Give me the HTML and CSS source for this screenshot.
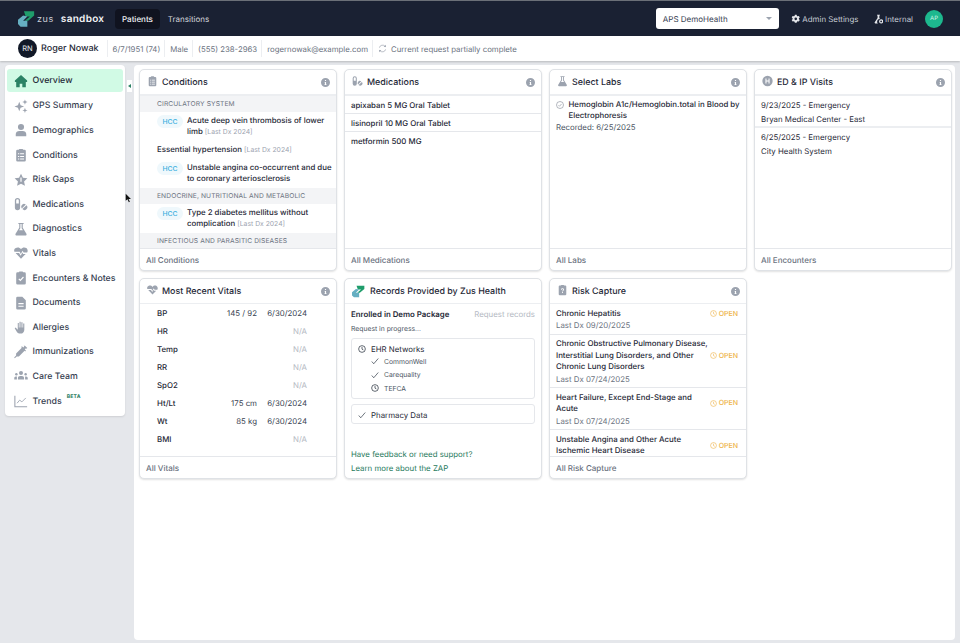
FILE: index.html
```html
<!DOCTYPE html>
<html lang="en">
<head>
    <meta charset="UTF-8">
    <meta name="viewport" content="width=device-width, initial-scale=1.0">
    <title>Roger Nowak - Overview</title>
    <link rel="stylesheet" href="styles.css">
</head>
<body>

<svg class="icon-defs" width="0" height="0" aria-hidden="true">
    <symbol id="i-logo" viewBox="0 0 20 20">
        <path d="M7 1h12v5l-7 6H8l6-5H9z" fill="#1f9d6b"/>
        <path d="M6 6l5 1-5 5h5v7H3l-3-3V11z" fill="#66afc2"/>
    </symbol>
    <symbol id="i-home" viewBox="0 0 16 16">
        <path d="M8 1L1 7.500V9h1.500v6h4v-4h3v4h4V9H15V7.500z"/>
    </symbol>
    <symbol id="i-spark" viewBox="0 0 16 16">
        <path d="M6 3l1.500 4 4 1.500-4 1.500L6 14l-1.500-4-4-1.500 4-1.500z"/>
        <path d="M12.500 .5l.8 2.200 2.200.8-2.200.8-.8 2.200-.8-2.200-2.200-.8 2.200-.8zM12.500 10l.8 2.200 2.200.8-2.200.8-.8 2.200-.8-2.200-2.200-.8 2.200-.8z"/>
    </symbol>
    <symbol id="i-person" viewBox="0 0 16 16">
        <circle cx="8" cy="4.500" r="3.500"/>
        <path d="M2 15v-2.500C2 10 4 9 6 9h4c2 0 4 1 4 3.500V15z"/>
    </symbol>
    <symbol id="i-clip" viewBox="0 0 16 16">
        <path fill-rule="evenodd" d="M4 2h1.500a1 1 0 0 1 1-1h3a1 1 0 0 1 1 1H12a1.500 1.500 0 0 1 1.500 1.500v10.500A1.500 1.500 0 0 1 12 15.500H4A1.500 1.500 0 0 1 2.500 14V3.500A1.500 1.500 0 0 1 4 2zM4.500 6v1.200h1.500V6zM7 6v1.200h4.500V6zM4.500 9v1.200h1.500V9zM7 9v1.200h4.500V9zM4.500 12v1.200h1.500V12zM7 12v1.200h4.500V12z"/>
    </symbol>
    <symbol id="i-star" viewBox="0 0 16 16">
        <path fill-rule="evenodd" d="M8 .8l2.200 4.700 5.100.6-3.800 3.500 1 5.100L8 12.200l-4.500 2.500 1-5.100L.7 6.100l5.100-.6zM7.300 5v5h1.400V5z"/>
    </symbol>
    <symbol id="i-pills" viewBox="0 0 16 16">
        <path fill-rule="evenodd" d="M1 4a3 3 0 0 1 6 0v8a3 3 0 0 1-6 0zM2.500 4v3.500h3V4a1.500 1.500 0 0 0-3 0z"/>
        <path d="M8.800 9.500a3.200 3.200 0 0 1 4.700-1L8.900 13.100a3.200 3.200 0 0 1-.1-3.600zM14.300 9.300a3.200 3.200 0 0 1-4.700 4.500z"/>
    </symbol>
    <symbol id="i-flask" viewBox="0 0 16 16">
        <path d="M5 1h6v1.300h-1V6.500l4.200 7A1.300 1.300 0 0 1 13 15.500H3a1.300 1.300 0 0 1-1.200-2l4.200-7V2.300H5zM7.300 2.300V7L5.800 9.500h4.400L8.700 7V2.300z"/>
    </symbol>
    <symbol id="i-heart" viewBox="0 0 16 16">
        <path d="M8 3.500C9.500 1.500 12 1 14 2.300c1.800 1.200 2 3.500 1 5.200H11L9.800 5.500 7.800 9 6.500 6.500h-6C-.2 4.800.2 3.300 2 2.300 4 1 6.500 1.500 8 3.500zM1.800 8h4l1.800 3 2-3.500.8 1.500h3L8 14.500z"/>
    </symbol>
    <symbol id="i-check-clip" viewBox="0 0 16 16">
        <path fill-rule="evenodd" d="M4 1.500h1.500a1 1 0 0 1 1-.8h3a1 1 0 0 1 1 .8H12A1.500 1.500 0 0 1 13.500 3v11a1.500 1.500 0 0 1-1.500 1.500H4A1.500 1.500 0 0 1 2.500 14V3A1.500 1.500 0 0 1 4 1.500zM5 9.500l2.300 2.300 4-4.500-1-.9-3 3.400-1.400-1.300z"/>
    </symbol>
    <symbol id="i-doc" viewBox="0 0 16 16">
        <path fill-rule="evenodd" d="M4 .8h5.500l4 4V14a1.500 1.500 0 0 1-1.500 1.500H4A1.500 1.500 0 0 1 2.500 14V2.300A1.500 1.500 0 0 1 4 .8zM5 8v1.300h6V8zM5 11v1.300h6V11z"/>
    </symbol>
    <symbol id="i-hand" viewBox="0 0 16 16">
        <path d="M4.300 3.500h1.200v5h.8V2h1.300v6.500h.8V2.500h1.300v6h.8V4h1.300v7c0 2.500-1.800 4.500-4.300 4.500H7c-2 0-3-1-4-2.500L.8 9.500l1-.8L4.300 11z"/>
    </symbol>
    <symbol id="i-syringe" viewBox="0 0 16 16">
        <path d="M12.500.8l2.700 2.700-.9.9-.7-.7-1.300 1.300 1.400 1.400-.9.9-.7-.7-6.500 6.500H3.100L.9 15 .2 14.400l2.200-2.300v-2.500L8.900 3.100l-.7-.7.9-.9 1.400 1.400 1.300-1.300-.7-.7z"/>
    </symbol>
    <symbol id="i-team" viewBox="0 0 16 16">
        <circle cx="8" cy="4.500" r="2.300"/>
        <circle cx="2.700" cy="6" r="1.400"/>
        <circle cx="13.300" cy="6" r="1.400"/>
        <path d="M4.500 12v-1.500C4.500 9 5.500 8 7 8h2c1.500 0 2.500 1 2.500 2.500V12zM.3 12v-1.500C.3 9.300 1 8.500 2 8.500h1.300v3.500zM15.700 12v-1.500c0-1.200-.7-2-1.700-2h-1.300v3.500z"/>
    </symbol>
    <symbol id="i-trend" viewBox="0 0 16 16">
        <path d="M1 2v12.500h14" fill="none" stroke="currentColor" stroke-width="1.200"/>
        <path d="M3.500 10.500L6.500 7l2.500 2 4.500-4.500" fill="none" stroke="currentColor" stroke-width="1"/>
    </symbol>
    <symbol id="i-hospital" viewBox="0 0 16 16">
        <path fill-rule="evenodd" d="M8 .5a7.500 7.500 0 1 1 0 15 7.500 7.500 0 0 1 0-15zM5 4.500v7h1.500V8.800h3v2.700H11v-7H9.500v2.800h-3V4.500z"/>
    </symbol>
    <symbol id="i-risk" viewBox="0 0 16 16">
        <path fill-rule="evenodd" d="M4 1.500h1.500a1 1 0 0 1 1-.8h3a1 1 0 0 1 1 .8H12A1.500 1.500 0 0 1 13.500 3v11a1.500 1.500 0 0 1-1.500 1.500H4A1.500 1.500 0 0 1 2.500 14V3A1.500 1.500 0 0 1 4 1.500zM8 5.500A2.200 2.200 0 0 0 5.800 7.500h1.300c.1-.5.4-.8.9-.8s.9.300.9.800c0 .9-1.500 1-1.500 2.700h1.300c0-1.200 1.500-1.400 1.500-2.900A2.200 2.200 0 0 0 8 5.500zM7.400 11v1.300h1.300V11z"/>
    </symbol>
    <symbol id="i-info" viewBox="0 0 16 16">
        <path fill-rule="evenodd" d="M8 0a8 8 0 1 1 0 16A8 8 0 0 1 8 0zM7 3.500v2h2v-2zM6.500 7v1.300H7v3h-.8v1.200h3.600v-1.200H9V7z"/>
    </symbol>
    <symbol id="i-clock" viewBox="0 0 16 16">
        <circle cx="8" cy="8" r="6.700" fill="none" stroke="currentColor" stroke-width="1.400"/>
        <path d="M8 4v4.300l2.800 1.500" fill="none" stroke="currentColor" stroke-width="1.400"/>
    </symbol>
    <symbol id="i-check" viewBox="0 0 16 16">
        <path d="M1.500 9l4 4.500L14.500 3" fill="none" stroke="currentColor" stroke-width="1.300"/>
    </symbol>
    <symbol id="i-gear" viewBox="0 0 16 16">
        <path fill-rule="evenodd" d="M6.500.8h3l.5 2 1.300.7 2-.6 1.500 2.600-1.500 1.400v1.500l1.500 1.400-1.500 2.600-2-.6-1.300.7-.5 2h-3l-.5-2-1.300-.7-2 .6L1.200 9.800l1.500-1.400V6.900L1.200 5.500l1.500-2.600 2 .6L6 2.800zM8 5.500a2.200 2.200 0 1 0 0 4.400 2.200 2.200 0 0 0 0-4.400z"/>
    </symbol>
    <symbol id="i-internal" viewBox="0 0 16 16">
        <path d="M5 1h5v1.300H9v4l1 1.700H8.500a4.500 4.500 0 0 0-2 7.500H2.300a1.300 1.300 0 0 1-1.100-2L6 6.300v-4H5z"/>
        <path fill-rule="evenodd" d="M12 8.500a3.500 3.500 0 1 1 0 7 3.500 3.500 0 0 1 0-7zm0 2a1.500 1.500 0 1 0 0 3 1.500 1.500 0 0 0 0-3z"/>
    </symbol>
    <symbol id="i-sync" viewBox="0 0 16 16">
        <path d="M2.500 6.500A5.700 5.700 0 0 1 12.800 4.500M13.500 9.500A5.700 5.700 0 0 1 3.200 11.500" fill="none" stroke="currentColor" stroke-width="1.200"/>
        <path d="M14 1.500v4h-4zM2 14.500v-4h4z"/>
    </symbol>
    <symbol id="i-circle-check" viewBox="0 0 16 16">
        <circle cx="8" cy="8" r="7" fill="none" stroke="currentColor" stroke-width="1"/>
        <path d="M5 8.500l2 2 4-4.500" fill="none" stroke="currentColor" stroke-width="1"/>
    </symbol>
</svg>

<header class="topbar">
    <div class="brand">
        <svg class="brand-logo"><use href="#i-logo"/></svg>
        <span class="brand-zus">zus</span>
        <span class="brand-env">sandbox</span>
    </div>
    <nav class="topnav">
        <a class="topnav-item active">Patients</a>
        <a class="topnav-item">Transitions</a>
    </nav>
    <div class="topbar-right">
        <div class="org-select">
            <span>APS DemoHealth</span>
            <span class="org-caret"></span>
        </div>
        <a class="top-link link-admin"><svg class="top-icon"><use href="#i-gear"/></svg>Admin Settings</a>
        <a class="top-link link-internal"><svg class="top-icon"><use href="#i-internal"/></svg>Internal</a>
        <div class="user-avatar">AP</div>
    </div>
</header>

<div class="patient-bar">
    <div class="patient-avatar">RN</div>
    <span class="patient-name">Roger Nowak</span>
    <span class="patient-field">6/7/1951 (74)</span>
    <span class="patient-field">Male</span>
    <span class="patient-field">(555) 238-2963</span>
    <span class="patient-field">rogernowak@example.com</span>
    <span class="patient-field patient-status"><svg class="sync-icon"><use href="#i-sync"/></svg>Current request partially complete</span>
</div>

<div class="app-body">
    <aside class="sidebar">
        <a class="side-item active"><svg class="side-icon"><use href="#i-home"/></svg>Overview</a>
        <a class="side-item"><svg class="side-icon"><use href="#i-spark"/></svg>GPS Summary</a>
        <a class="side-item"><svg class="side-icon"><use href="#i-person"/></svg>Demographics</a>
        <a class="side-item"><svg class="side-icon"><use href="#i-clip"/></svg>Conditions</a>
        <a class="side-item"><svg class="side-icon"><use href="#i-star"/></svg>Risk Gaps</a>
        <a class="side-item"><svg class="side-icon"><use href="#i-pills"/></svg>Medications</a>
        <a class="side-item"><svg class="side-icon"><use href="#i-flask"/></svg>Diagnostics</a>
        <a class="side-item"><svg class="side-icon"><use href="#i-heart"/></svg>Vitals</a>
        <a class="side-item"><svg class="side-icon"><use href="#i-check-clip"/></svg>Encounters &amp; Notes</a>
        <a class="side-item"><svg class="side-icon"><use href="#i-doc"/></svg>Documents</a>
        <a class="side-item"><svg class="side-icon"><use href="#i-hand"/></svg>Allergies</a>
        <a class="side-item"><svg class="side-icon"><use href="#i-syringe"/></svg>Immunizations</a>
        <a class="side-item"><svg class="side-icon"><use href="#i-team"/></svg>Care Team</a>
        <a class="side-item"><svg class="side-icon"><use href="#i-trend"/></svg>Trends<sup class="beta">BETA</sup></a>
    </aside>
    <div class="collapse-tab"><span class="collapse-arrow"></span></div>
    <svg class="cursor" viewBox="0 0 10 14"><path d="M1 1v10l2.500-2.300L5.500 13l1.500-.7L5 8.300h3.500z"/></svg>

    <main class="dashboard">
        <section class="card">
            <div class="card-head">
                <svg class="card-icon"><use href="#i-clip"/></svg>
                <h2>Conditions</h2>
                <svg class="info-icon"><use href="#i-info"/></svg>
            </div>
            <div class="card-body">
                <div class="cond-group">Circulatory System</div>
                <div class="cond-row">
                    <span class="hcc">HCC</span>
                    <p>Acute deep vein thrombosis of lower limb <small>[Last Dx 2024]</small></p>
                </div>
                <div class="cond-row">
                    <p>Essential hypertension <small>[Last Dx 2024]</small></p>
                </div>
                <div class="cond-row">
                    <span class="hcc">HCC</span>
                    <p>Unstable angina co-occurrent and due to coronary arteriosclerosis</p>
                </div>
                <div class="cond-group">Endocrine, Nutritional and Metabolic</div>
                <div class="cond-row">
                    <span class="hcc">HCC</span>
                    <p>Type 2 diabetes mellitus without complication <small>[Last Dx 2024]</small></p>
                </div>
                <div class="cond-group">Infectious and Parasitic Diseases</div>
            </div>
            <div class="card-foot">All Conditions</div>
        </section>

        <section class="card">
            <div class="card-head">
                <svg class="card-icon"><use href="#i-pills"/></svg>
                <h2>Medications</h2>
                <svg class="info-icon"><use href="#i-info"/></svg>
            </div>
            <div class="card-body">
                <div class="med-row">apixaban 5 MG Oral Tablet</div>
                <div class="med-row">lisinopril 10 MG Oral Tablet</div>
                <div class="med-row plain">metformin 500 MG</div>
            </div>
            <div class="card-foot">All Medications</div>
        </section>

        <section class="card">
            <div class="card-head">
                <svg class="card-icon"><use href="#i-flask"/></svg>
                <h2>Select Labs</h2>
                <svg class="info-icon"><use href="#i-info"/></svg>
            </div>
            <div class="card-body">
                <div class="lab-row">
                    <div class="lab-name">
                        <svg class="lab-check"><use href="#i-circle-check"/></svg>
                        <span>Hemoglobin A1c/Hemoglobin.total in Blood by Electrophoresis</span>
                    </div>
                    <div class="lab-date">Recorded: 6/25/2025</div>
                </div>
            </div>
            <div class="card-foot">All Labs</div>
        </section>

        <section class="card">
            <div class="card-head">
                <svg class="card-icon"><use href="#i-hospital"/></svg>
                <h2>ED &amp; IP Visits</h2>
                <svg class="info-icon"><use href="#i-info"/></svg>
            </div>
            <div class="card-body">
                <div class="visit-row">
                    <div>9/23/2025 - Emergency</div>
                    <div>Bryan Medical Center - East</div>
                </div>
                <div class="visit-row plain">
                    <div>6/25/2025 - Emergency</div>
                    <div>City Health System</div>
                </div>
            </div>
            <div class="card-foot">All Encounters</div>
        </section>

        <section class="card card-low">
            <div class="card-head">
                <svg class="card-icon"><use href="#i-heart"/></svg>
                <h2>Most Recent Vitals</h2>
                <svg class="info-icon"><use href="#i-info"/></svg>
            </div>
            <div class="card-body vitals">
                <span class="v-label">BP</span><span>145 / 92</span><span>6/30/2024</span>
                <span class="v-label">HR</span><span></span><span class="na">N/A</span>
                <span class="v-label">Temp</span><span></span><span class="na">N/A</span>
                <span class="v-label">RR</span><span></span><span class="na">N/A</span>
                <span class="v-label">SpO2</span><span></span><span class="na">N/A</span>
                <span class="v-label">Ht/Lt</span><span>175 cm</span><span>6/30/2024</span>
                <span class="v-label">Wt</span><span>85 kg</span><span>6/30/2024</span>
                <span class="v-label">BMI</span><span></span><span class="na">N/A</span>
            </div>
            <div class="card-foot">All Vitals</div>
        </section>

        <section class="card card-low">
            <div class="card-head">
                <svg class="card-icon logo-icon"><use href="#i-logo"/></svg>
                <h2>Records Provided by Zus Health</h2>
            </div>
            <div class="card-body records">
                <div class="records-top">
                    <strong>Enrolled in Demo Package</strong>
                    <span class="records-request">Request records</span>
                </div>
                <div class="records-progress">Request in progress...</div>
                <div class="net-box">
                    <div class="net-title"><svg class="net-icon"><use href="#i-clock"/></svg>EHR Networks</div>
                    <div class="net-sub"><svg class="net-icon"><use href="#i-check"/></svg>CommonWell</div>
                    <div class="net-sub"><svg class="net-icon"><use href="#i-check"/></svg>Carequality</div>
                    <div class="net-sub"><svg class="net-icon"><use href="#i-clock"/></svg>TEFCA</div>
                </div>
                <div class="net-box">
                    <div class="net-title"><svg class="net-icon"><use href="#i-check"/></svg>Pharmacy Data</div>
                </div>
                <div class="records-links">
                    <a>Have feedback or need support?</a>
                    <a>Learn more about the ZAP</a>
                </div>
            </div>
        </section>

        <section class="card card-low">
            <div class="card-head">
                <svg class="card-icon"><use href="#i-risk"/></svg>
                <h2>Risk Capture</h2>
                <svg class="info-icon"><use href="#i-info"/></svg>
            </div>
            <div class="card-body">
                <div class="risk-row">
                    <div class="risk-head">
                        <p>Chronic Hepatitis</p>
                        <span class="risk-open"><svg class="open-icon"><use href="#i-clock"/></svg>OPEN</span>
                    </div>
                    <small>Last Dx 09/20/2025</small>
                </div>
                <div class="risk-row">
                    <div class="risk-head">
                        <p>Chronic Obstructive Pulmonary Disease, Interstitial Lung Disorders, and Other Chronic Lung Disorders</p>
                        <span class="risk-open"><svg class="open-icon"><use href="#i-clock"/></svg>OPEN</span>
                    </div>
                    <small>Last Dx 07/24/2025</small>
                </div>
                <div class="risk-row">
                    <div class="risk-head">
                        <p>Heart Failure, Except End-Stage and Acute</p>
                        <span class="risk-open"><svg class="open-icon"><use href="#i-clock"/></svg>OPEN</span>
                    </div>
                    <small>Last Dx 07/24/2025</small>
                </div>
                <div class="risk-row">
                    <div class="risk-head">
                        <p>Unstable Angina and Other Acute Ischemic Heart Disease</p>
                        <span class="risk-open"><svg class="open-icon"><use href="#i-clock"/></svg>OPEN</span>
                    </div>
                </div>
            </div>
            <div class="card-foot">All Risk Capture</div>
        </section>
    </main>
</div>

</body>
</html>
```

FILE: styles.css
```css
* {
    box-sizing: border-box;
}

html, body {
    height: 100%;
}

body {
    margin: 0;
    display: flex;
    flex-direction: column;
    overflow: hidden;
    font-family: Inter, "Liberation Sans", sans-serif;
    font-size: 7.850px;
    text-rendering: geometricPrecision;
    color: #1f2937;
    background-color: #e5e7eb;
}

.icon-defs {
    position: absolute;
}

h2, p {
    margin: 0;
    font-weight: inherit;
}

small {
    font-size: inherit;
}

/* top bar */
.topbar {
    height: 36px;
    flex: none;
    display: flex;
    align-items: center;
    padding: 0 17px 0 18px;
    color: #e5e7eb;
    background-color: #1a2133;
    border-top: 1px solid #6b7078;
}

.brand {
    display: flex;
    align-items: center;
    width: 97px;
}

.brand-logo {
    width: 17px;
    height: 18px;
    margin-right: 2px;
}

.brand-zus {
    font-size: 9px;
    letter-spacing: 0.6px;
    color: #cbd0d8;
    margin-top: 2px;
}

.brand-env {
    margin-left: 7px;
    font-size: 10px;
    font-weight: 600;
    letter-spacing: 0.3px;
    color: #f3f4f6;
}

.topnav {
    display: flex;
    align-items: center;
}

.topnav-item {
    padding: 5px 8px;
    font-size: 8px;
    border-radius: 4px;
    color: #d1d5db;
}

.topnav-item.active {
    padding: 5px 7px;
    font-weight: 500;
    color: #f3f4f6;
    background-color: #10131f;
}

.topbar-right {
    margin-left: auto;
    display: flex;
    align-items: center;
}

.org-select {
    width: 123px;
    height: 21px;
    display: flex;
    align-items: center;
    justify-content: space-between;
    padding: 0 7px;
    font-size: 8px;
    color: #374151;
    background-color: #fff;
    border-radius: 3px;
}

.org-caret {
    border-left: 3.500px solid transparent;
    border-right: 3.500px solid transparent;
    border-top: 3.500px solid #9ca3af;
}

.top-link {
    display: flex;
    align-items: center;
    gap: 2px;
    font-size: 7.900px;
    color: #c7ccd4;
}

.link-admin {
    margin-left: 12px;
}

.link-internal {
    margin-left: 15px;
}

.top-icon {
    width: 9.500px;
    height: 10px;
    fill: #e5e7eb;
}

.user-avatar {
    width: 18px;
    height: 18px;
    margin-left: 12px;
    display: flex;
    align-items: center;
    justify-content: center;
    font-size: 6px;
    color: #d1f5e6;
    background-color: #1db88e;
    border-radius: 50%;
}

/* patient strip */
.patient-bar {
    height: 25px;
    flex: none;
    display: flex;
    align-items: center;
    padding-left: 18px;
    background-color: #fff;
    box-shadow: 0 1px 2px rgba(0, 0, 0, 0.2);
    position: relative;
}

.patient-avatar {
    width: 19px;
    height: 19px;
    display: flex;
    align-items: center;
    justify-content: center;
    font-size: 7.500px;
    color: #e5e7eb;
    background-color: #111827;
    border-radius: 50%;
}

.patient-name {
    margin-left: 4px;
    margin-right: 8px;
    font-size: 9px;
    font-weight: 500;
    color: #1f2937;
}

.patient-field {
    display: flex;
    align-items: center;
    height: 17px;
    padding: 0 4px 0 5px;
    font-size: 7.800px;
    color: #6b7280;
    border-left: 1px solid #eceef1;
}

.patient-status {
    padding-left: 5px;
}

.sync-icon {
    width: 9px;
    height: 9px;
    margin-right: 4px;
    fill: #9ca3af;
    color: #9ca3af;
}

/* main area */
.app-body {
    flex: 1;
    min-height: 0;
    display: flex;
    align-items: flex-start;
    position: relative;
    padding: 4px 5px 3px 5px;
}

.sidebar {
    width: 120px;
    flex: none;
    padding: 4px 2px 3px;
    background-color: #fff;
    border-radius: 4px;
    box-shadow: 0 1px 2px rgba(0, 0, 0, 0.1);
}

.side-item {
    height: 24.600px;
    display: flex;
    align-items: center;
    padding-left: 7px;
    font-size: 8.800px;
    font-weight: 500;
    color: #374151;
    border-radius: 3px;
}

.side-item.active {
    height: 23px;
    margin-bottom: 1.600px;
    color: #1f2937;
    background-color: #d1fae5;
}

.side-icon {
    width: 14px;
    height: 14px;
    margin-right: 4.500px;
    flex: none;
    fill: #9ca3af;
    color: #9ca3af;
}

.side-item.active .side-icon {
    fill: #2b8265;
}

.beta {
    margin-left: 5px;
    margin-top: -8px;
    font-size: 5px;
    font-weight: 700;
    letter-spacing: 0.3px;
    color: #1f7a5c;
}

.collapse-tab {
    width: 5px;
    height: 12px;
    flex: none;
    margin-top: 15px;
    margin-left: 2px;
    margin-right: 2px;
    display: flex;
    align-items: center;
    justify-content: center;
    background-color: #fff;
}

.collapse-arrow {
    border-top: 2.500px solid transparent;
    border-bottom: 2.500px solid transparent;
    border-right: 3px solid #2b8265;
}

.cursor {
    position: absolute;
    left: 125px;
    top: 132px;
    width: 7px;
    height: 10px;
    fill: #111;
}

.dashboard {
    flex: 1;
    align-self: stretch;
    display: grid;
    grid-template-columns: repeat(4, 198px);
    grid-template-rows: 202px 201px;
    column-gap: 7px;
    row-gap: 7px;
    align-content: start;
    padding: 4px 0 0 5px;
    background-color: #fff;
    border-radius: 4px;
}

/* cards */
.card {
    display: flex;
    flex-direction: column;
    min-height: 0;
    background-color: #fff;
    border: 1px solid #dfe2e6;
    border-radius: 5px;
    box-shadow: 0 1px 2px rgba(0, 0, 0, 0.12);
}

.card-head {
    height: 26px;
    flex: none;
    display: flex;
    align-items: center;
    padding: 0 6px 0 7px;
    border-bottom: 2px solid #eceef1;
}

.card-low .card-head {
    height: 25px;
    border-bottom-width: 1px;
}

.card-head h2 {
    font-size: 8.900px;
    font-weight: 500;
    color: #1f2937;
}

.card-icon {
    width: 11px;
    height: 12px;
    margin-right: 4px;
    margin-top: -3px;
    flex: none;
    fill: #9ca3af;
}

.logo-icon {
    width: 13px;
    height: 13px;
    margin-right: 5px;
    margin-top: 0;
}

.info-icon {
    width: 9px;
    height: 9px;
    margin-left: auto;
    fill: #9ca3af;
}

.card-body {
    flex: 1;
    min-height: 0;
    overflow: hidden;
}

.card-foot {
    height: 22px;
    flex: none;
    display: flex;
    align-items: center;
    padding: 1px 6px 0;
    font-size: 8px;
    font-weight: 500;
    color: #6b7280;
    border-top: 1px solid #e5e7eb;
}

/* conditions */
.cond-group {
    height: 15.500px;
    display: flex;
    align-items: center;
    padding-left: 17px;
    font-size: 6.700px;
    letter-spacing: 0.1px;
    text-transform: uppercase;
    color: #6b7280;
    background-color: #f3f4f6;
}

.cond-row {
    display: flex;
    align-items: flex-start;
    padding: 3.350px 1px 3.350px 17px;
    font-weight: 500;
    line-height: 11.300px;
    color: #1f2937;
}

.cond-row small {
    font-size: 6.800px;
    font-weight: 400;
    color: #9ca3af;
}

.hcc {
    flex: none;
    width: 26px;
    height: 13px;
    margin-right: 4px;
    display: flex;
    align-items: center;
    justify-content: center;
    font-size: 6.800px;
    font-weight: 500;
    color: #38aede;
    background-color: #eff8fc;
    border-radius: 7px;
}

/* medications */
.med-row {
    height: 18.200px;
    display: flex;
    align-items: center;
    padding: 0 6px;
    font-weight: 500;
    border-bottom: 1px solid #e5e7eb;
}

.med-row.plain {
    border-bottom: none;
}

/* labs */
.lab-row {
    padding: 3px 4px 3px 6px;
    line-height: 11.300px;
}

.lab-name {
    display: flex;
    font-weight: 500;
}

.lab-check {
    width: 8px;
    height: 8px;
    margin-top: 2px;
    margin-right: 4.500px;
    flex: none;
    color: #6b7280;
    fill: none;
}

.lab-date {
    color: #4b5563;
}

/* visits */
.visit-row {
    height: 31.500px;
    padding: 1.500px 6px 0;
    line-height: 14.400px;
    border-bottom: 2px solid #eceef1;
}

.visit-row.plain {
    padding-top: 2px;
    border-bottom: none;
}

/* vitals */
.vitals {
    display: grid;
    grid-template-columns: 1fr auto 50px;
    grid-auto-rows: 18px;
    align-items: center;
    align-content: start;
    padding: 0 29px 0 17px;
    text-align: right;
    color: #374151;
}

.v-label {
    text-align: left;
    font-weight: 500;
    color: #1f2937;
}

.na {
    color: #b4b9c2;
}

/* records */
.records {
    display: flex;
    flex-direction: column;
    padding: 4.500px 6px 4px;
}

.records-top {
    display: flex;
    justify-content: space-between;
    line-height: 11px;
}

.records-top strong {
    font-weight: 600;
}

.records-request {
    color: #b4b9c2;
}

.records-progress {
    margin-top: 3.500px;
    font-size: 6.800px;
    line-height: 11px;
    color: #4b5563;
}

.net-box {
    margin-top: 3.500px;
    padding: 4px 6px 2.500px;
    border: 1px solid #e5e7eb;
    border-radius: 3px;
}

.net-box + .net-box {
    margin-top: 5px;
}

.net-title {
    display: flex;
    align-items: center;
    height: 12px;
}

.net-sub {
    display: flex;
    align-items: center;
    height: 13.500px;
    padding-left: 13px;
    font-size: 6.800px;
    color: #4b5563;
}

.net-icon {
    width: 8px;
    height: 8px;
    margin-right: 5px;
    flex: none;
    color: #1f2937;
    fill: none;
}

.records-links {
    margin-top: auto;
    display: flex;
    flex-direction: column;
    gap: 3.500px;
    line-height: 11px;
    color: #1f7a5c;
}

/* risk capture */
.risk-row {
    padding: 3.700px 6px 2.300px;
    font-weight: 500;
    line-height: 11.300px;
    border-bottom: 1px solid #e5e7eb;
}

.risk-head {
    display: flex;
    align-items: center;
}

.risk-head p {
    flex: 1;
    min-width: 0;
}

.risk-row small {
    display: block;
    margin-top: 1.200px;
    font-weight: 400;
    color: #6b7280;
}

.risk-open {
    flex: none;
    display: flex;
    align-items: center;
    margin-right: 2px;
    font-size: 7px;
    font-weight: 500;
    color: #eeb44a;
}

.open-icon {
    width: 7px;
    height: 7px;
    margin-right: 2px;
    color: #eeb44a;
    fill: none;
}
```
